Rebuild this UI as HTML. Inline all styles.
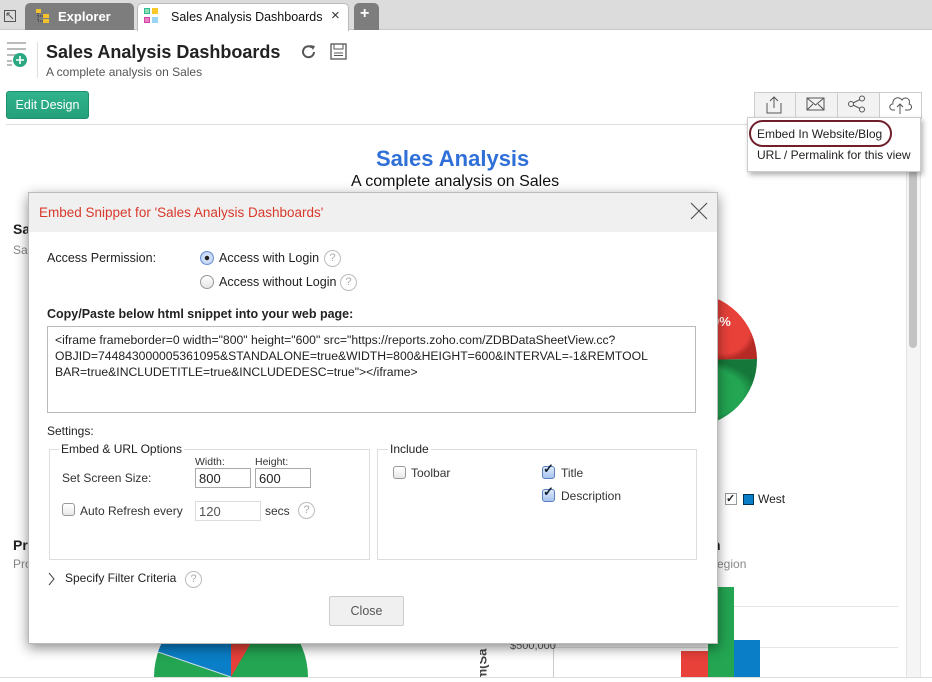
<!DOCTYPE html>
<html><head><style>
*{box-sizing:border-box;margin:0;padding:0}
body{width:932px;height:682px;overflow:hidden;background:#fff;font-family:"Liberation Sans",Arial,sans-serif;position:relative;color:#222}
.a{position:absolute}
.t{position:absolute;white-space:nowrap}
.q{position:absolute;width:17px;height:17px;border:1px solid #bbb;border-radius:50%;color:#aaa;font-size:11px;text-align:center;line-height:15px}
.cb{position:absolute;width:13px;height:13px;border:1px solid #999;border-radius:3px;background:linear-gradient(#fff,#e8e8e8)}
.cbc{position:absolute;width:13px;height:13px;border:1px solid #5a7fc0;border-radius:3px;background:linear-gradient(#dfe9fb,#a9c4ef)}
.inp{position:absolute;height:20px;border:1px solid #aaa;font-size:13px;padding:2px 3px;background:#fff}
</style></head><body>
<!-- tab bar -->
<div class="a" style="left:0;top:0;width:932px;height:30px;background:#dcdcdc;border-bottom:1px solid #c8c8c8"></div>
<svg class="a" style="left:4px;top:10px" width="12" height="12"><rect x="0.5" y="0.5" width="11" height="11" fill="none" stroke="#555"/><path d="M3 3L9 9M3 3H6M3 3V6" stroke="#555" fill="none"/></svg>
<div class="a" style="left:25px;top:3px;width:109px;height:27px;background:#7d7d7d;border-radius:5px 5px 0 0"></div>
<svg class="a" style="left:35px;top:8px" width="16" height="16"><rect x="1" y="1" width="5" height="4" fill="#f3c02f"/><rect x="8" y="6" width="6" height="4" fill="#f3c02f"/><rect x="8" y="11" width="6" height="4" fill="#f3c02f"/><path d="M3 5V13H8M3 8H8" stroke="#333" stroke-dasharray="1 1" fill="none"/></svg>
<div class="t" style="left:58px;top:9px;color:#fff;font-size:13px;font-weight:bold">Explorer</div>
<div class="a" style="left:137px;top:3px;width:212px;height:28px;background:#fff;border:1px solid #bbb;border-bottom:none;border-radius:5px 5px 0 0"></div>
<div class="a" style="left:144px;top:8px;width:6px;height:6px;background:#8fe0b0;border:1px solid #3b9"></div>
<div class="a" style="left:152px;top:8px;width:6px;height:6px;background:#f8c82a"></div>
<div class="a" style="left:144px;top:17px;width:6px;height:6px;background:#f080c0;border:1px solid #c4a"></div>
<div class="a" style="left:152px;top:17px;width:6px;height:6px;background:#9ad4f4"></div>
<div class="t" style="left:171px;top:10px;font-size:12.5px;color:#111">Sales Analysis Dashboards</div>
<div class="t" style="left:331px;top:7px;font-size:15px;color:#333">×</div>
<div class="a" style="left:354px;top:3px;width:25px;height:27px;background:#7d7d7d;border-radius:5px 5px 0 0"></div>
<div class="t" style="left:360px;top:5px;color:#fff;font-size:16px;font-weight:bold">+</div>
<!-- header -->
<svg class="a" style="left:6px;top:41px" width="24" height="28"><g stroke="#bbb" stroke-width="2"><path d="M1 2H20M1 8H20M1 14H10M1 20H6M1 24H6"/></g><circle cx="14" cy="19" r="7" fill="#2aa882"/><path d="M14 15V23M10 19H18" stroke="#fff" stroke-width="1.6"/></svg>
<div class="a" style="left:37px;top:42px;width:1px;height:36px;background:#ddd"></div>
<div class="t" style="left:46px;top:42px;font-size:18px;font-weight:bold;color:#222">Sales Analysis Dashboards</div>
<div class="t" style="left:46px;top:65px;font-size:12px;color:#555">A complete analysis on Sales</div>
<svg class="a" style="left:301px;top:44px" width="16" height="16"><path d="M13 8A5.5 5.5 0 1 1 11 3.5" fill="none" stroke="#555" stroke-width="2"/><path d="M9 1L14 2L12 6Z" fill="#555"/></svg>
<svg class="a" style="left:330px;top:43px" width="18" height="18"><rect x="1" y="1" width="15" height="15" fill="none" stroke="#555" stroke-width="1.3"/><rect x="4" y="1" width="9" height="5" fill="none" stroke="#555"/><path d="M4 10H13M4 12.5H13" stroke="#555"/></svg>
<div class="a" style="left:6px;top:91px;width:83px;height:28px;background:linear-gradient(#30b38c,#24a07a);border:1px solid #1f8e6c;border-radius:3px;color:#fff;font-size:12.5px;text-align:center;line-height:26px">Edit Design</div>
<div class="a" style="left:6px;top:124px;width:899px;height:1px;background:#ddd"></div>
<!-- toolbar -->
<div class="a" style="left:754px;top:92px;width:168px;height:26px;border:1px solid #ccc;background:#f2f2f2"></div>
<div class="a" style="left:795px;top:92px;width:1px;height:26px;background:#ccc"></div>
<div class="a" style="left:837px;top:92px;width:1px;height:26px;background:#ccc"></div>
<div class="a" style="left:879px;top:92px;width:43px;height:27px;background:#fff;border:1px solid #ccc;border-bottom:none"></div>
<svg class="a" style="left:764px;top:95px" width="20" height="20"><path d="M3 8V18H17V8M10 2V13M6 6L10 2L14 6" fill="none" stroke="#555"/></svg>
<svg class="a" style="left:806px;top:96px" width="20" height="16"><rect x="1" y="2" width="17" height="12" fill="none" stroke="#555"/><path d="M1 2L9.5 9L18 2M1 14L7 8M18 14L12 8" fill="none" stroke="#555"/></svg>
<svg class="a" style="left:847px;top:95px" width="20" height="18"><circle cx="4" cy="9" r="2.5" fill="none" stroke="#555"/><circle cx="15" cy="3.5" r="2.5" fill="none" stroke="#555"/><circle cx="15" cy="14.5" r="2.5" fill="none" stroke="#555"/><path d="M6 8L13 4.5M6 10L13 13.5" stroke="#555"/></svg>
<svg class="a" style="left:889px;top:95px" width="24" height="20"><path d="M6 15H3.5A3 3 0 0 1 4 9A5 5 0 0 1 13 5A4 4 0 0 1 20 9A3 3 0 0 1 19 15H16" fill="none" stroke="#555"/><path d="M11 19V9M8 12L11 9L14 12" fill="none" stroke="#555"/></svg>
<!-- scrollbar -->
<div class="a" style="left:906px;top:125px;width:15px;height:552px;background:#f5f5f5;border-left:1px solid #e4e4e4;border-right:1px solid #e4e4e4"></div>
<div class="a" style="left:909px;top:170px;width:8px;height:178px;background:#c3c3c3;border-radius:4px"></div>
<!-- dropdown -->
<div class="a" style="left:747px;top:117px;width:174px;height:55px;background:#fff;border:1px solid #ccc;box-shadow:2px 3px 5px rgba(0,0,0,.3)"></div>
<div class="a" style="left:749px;top:120px;width:143px;height:27px;border:2px solid #6e1f2b;border-radius:14px"></div>
<div class="t" style="left:757px;top:127px;font-size:12px;color:#222">Embed In Website/Blog</div>
<div class="t" style="left:757px;top:148px;font-size:12px;color:#222">URL / Permalink for this view</div>
<!-- background dashboard -->
<div class="t" style="left:376px;top:146px;font-size:22px;font-weight:bold;color:#2f6fd8">Sales Analysis</div>
<div class="t" style="left:351px;top:173px;font-size:16px;color:#111">A complete analysis on Sales</div>
<div class="t" style="left:13px;top:221px;font-size:14px;font-weight:bold">Sa</div>
<div class="t" style="left:13px;top:243px;font-size:12px;color:#888">Sal</div>
<div class="t" style="left:13px;top:537px;font-size:14px;font-weight:bold">Pr</div>
<div class="t" style="left:13px;top:557px;font-size:12px;color:#888">Pro</div>
<div class="t" style="left:712px;top:537px;font-size:14px;font-weight:bold">n</div>
<div class="t" style="left:717px;top:557px;font-size:12px;color:#888">egion</div>
<svg class="a" style="left:600px;top:280px" width="170" height="160"><defs><radialGradient id="g1"><stop offset="0.8" stop-color="#e8413a"/><stop offset="1" stop-color="#b52a25"/></radialGradient><radialGradient id="g2"><stop offset="0.8" stop-color="#23a552"/><stop offset="1" stop-color="#16773a"/></radialGradient></defs><path d="M90 80L157 79A67 67 0 0 0 90 13Z" fill="url(#g1)"/><path d="M90 13A67 67 0 0 0 23 80L90 80Z" fill="#e8413a"/><path d="M23 80A67 67 0 0 0 157 79L90 80Z" fill="url(#g2)"/><text x="112" y="46" fill="#fff" font-size="13" font-weight="bold" font-family="Liberation Sans">0%</text></svg>
<div class="a" style="left:725px;top:493px;width:12px;height:12px;border:1px solid #999;font-size:11px;line-height:10px;font-weight:bold">✓</div>
<div class="a" style="left:743px;top:494px;width:11px;height:11px;background:#0a7fc8;border:1px solid #035"></div>
<div class="t" style="left:758px;top:492px;font-size:12px">West</div>
<svg class="a" style="left:150px;top:600px" width="165" height="77"><circle cx="81" cy="77" r="77" fill="#23a552"/><path d="M81 77L81 0A77 77 0 0 0 8 52Z" fill="#0a7fc8"/><path d="M81 77L81 0A77 77 0 0 1 120 10Z" fill="#e8413a"/><path d="M81 77L8 52" stroke="#cde" stroke-width="1"/></svg>
<div class="a" style="left:553px;top:590px;width:1px;height:87px;background:#ccc"></div>
<div class="a" style="left:553px;top:606px;width:345px;height:1px;background:#e5e5e5"></div>
<div class="a" style="left:553px;top:647px;width:345px;height:1px;background:#e5e5e5"></div>
<div class="t" style="left:510px;top:640px;font-size:11px;color:#555">$500,000</div>
<div class="a" style="left:480px;top:645px;width:20px;height:32px;overflow:hidden"><div class="t" style="left:-14px;top:12px;font-size:13px;font-weight:bold;color:#444;transform:rotate(-90deg)">m(Sa</div></div>
<div class="a" style="left:681px;top:651px;width:29px;height:26px;background:#e8413a"></div>
<div class="a" style="left:708px;top:587px;width:26px;height:90px;background:#23a552"></div>
<div class="a" style="left:734px;top:640px;width:26px;height:37px;background:#0a7fc8"></div>
<div class="a" style="left:0;top:677px;width:932px;height:5px;background:#fff;border-top:1px solid #ddd"></div>
<!-- dialog -->
<div class="a" style="left:28px;top:192px;width:690px;height:452px;background:#fff;border:1px solid #bbb;box-shadow:0 4px 12px rgba(0,0,0,.45)"></div>
<div class="a" style="left:29px;top:193px;width:688px;height:39px;background:#f0f0f0"></div>
<div class="t" style="left:39px;top:205px;font-size:13.5px;color:#d9392b">Embed Snippet for 'Sales Analysis Dashboards'</div>
<svg class="a" style="left:690px;top:202px" width="18" height="18"><path d="M1 1L17 17M17 1L1 17" stroke="#555" stroke-width="1.2"/></svg>
<div class="t" style="left:47px;top:251px;font-size:12.5px">Access Permission:</div>
<div class="a" style="left:200px;top:251px;width:14px;height:14px;border-radius:50%;border:1px solid #6a8fd0;background:radial-gradient(circle,#222 2px,#dbe7fb 2.5px,#a9c4ef)"></div>
<div class="t" style="left:219px;top:251px;font-size:12.5px">Access with Login</div>
<div class="q" style="left:324px;top:250px">?</div>
<div class="a" style="left:200px;top:275px;width:14px;height:14px;border-radius:50%;border:1px solid #999;background:linear-gradient(#fff,#e5e5e5)"></div>
<div class="t" style="left:219px;top:275px;font-size:12.5px">Access without Login</div>
<div class="q" style="left:340px;top:274px">?</div>
<div class="t" style="left:47px;top:307px;font-size:12.5px;font-weight:bold">Copy/Paste below html snippet into your web page:</div>
<div class="a" style="left:47px;top:326px;width:649px;height:87px;border:1px solid #bbb;padding:5px 7px;font-size:12.2px;line-height:16px;color:#222;white-space:nowrap">&lt;iframe frameborder=0 width="800" height="600" src="https://reports.zoho.com/ZDBDataSheetView.cc?<br>OBJID=744843000005361095&amp;STANDALONE=true&amp;WIDTH=800&amp;HEIGHT=600&amp;INTERVAL=-1&amp;REMTOOL<br>BAR=true&amp;INCLUDETITLE=true&amp;INCLUDEDESC=true"&gt;&lt;/iframe&gt;</div>
<div class="t" style="left:47px;top:424px;font-size:12px">Settings:</div>
<div class="a" style="left:49px;top:449px;width:321px;height:111px;border:1px solid #ddd"></div>
<div class="t" style="left:59px;top:442px;font-size:12px;background:#fff;padding:0 2px">Embed &amp; URL Options</div>
<div class="a" style="left:377px;top:449px;width:320px;height:111px;border:1px solid #ddd"></div>
<div class="t" style="left:388px;top:442px;font-size:12px;background:#fff;padding:0 2px">Include</div>
<div class="t" style="left:195px;top:456px;font-size:10.5px;color:#333">Width:</div>
<div class="t" style="left:255px;top:456px;font-size:10.5px;color:#333">Height:</div>
<div class="t" style="left:62px;top:471px;font-size:12px;color:#333">Set Screen Size:</div>
<div class="inp" style="left:195px;top:468px;width:56px">800</div>
<div class="inp" style="left:255px;top:468px;width:56px">600</div>
<div class="cb" style="left:62px;top:503px"></div>
<div class="t" style="left:80px;top:504px;font-size:12px;color:#333">Auto Refresh every</div>
<div class="inp" style="left:195px;top:501px;width:66px;border-color:#ddd;color:#555">120</div>
<div class="t" style="left:265px;top:504px;font-size:12px;color:#333">secs</div>
<div class="q" style="left:298px;top:502px">?</div>
<div class="cb" style="left:393px;top:466px"></div>
<div class="t" style="left:411px;top:466px;font-size:12px;color:#333">Toolbar</div>
<div class="cbc" style="left:542px;top:466px"></div><div class="t" style="left:543px;top:461px;font-size:13px;font-weight:bold;color:#123">✓</div>
<div class="t" style="left:561px;top:466px;font-size:12px;color:#333">Title</div>
<div class="cbc" style="left:542px;top:489px"></div><div class="t" style="left:543px;top:484px;font-size:13px;font-weight:bold;color:#123">✓</div>
<div class="t" style="left:561px;top:489px;font-size:12px;color:#333">Description</div>
<svg class="a" style="left:48px;top:572px" width="8" height="14"><path d="M1 1L6 7L1 13" fill="none" stroke="#444"/></svg>
<div class="t" style="left:65px;top:571px;font-size:12px">Specify Filter Criteria</div>
<div class="q" style="left:185px;top:571px">?</div>
<div class="a" style="left:329px;top:596px;width:75px;height:30px;background:#f0f0f0;border:1px solid #ccc;border-radius:2px;font-size:12.5px;color:#555;text-align:center;line-height:28px">Close</div>
</body></html>
